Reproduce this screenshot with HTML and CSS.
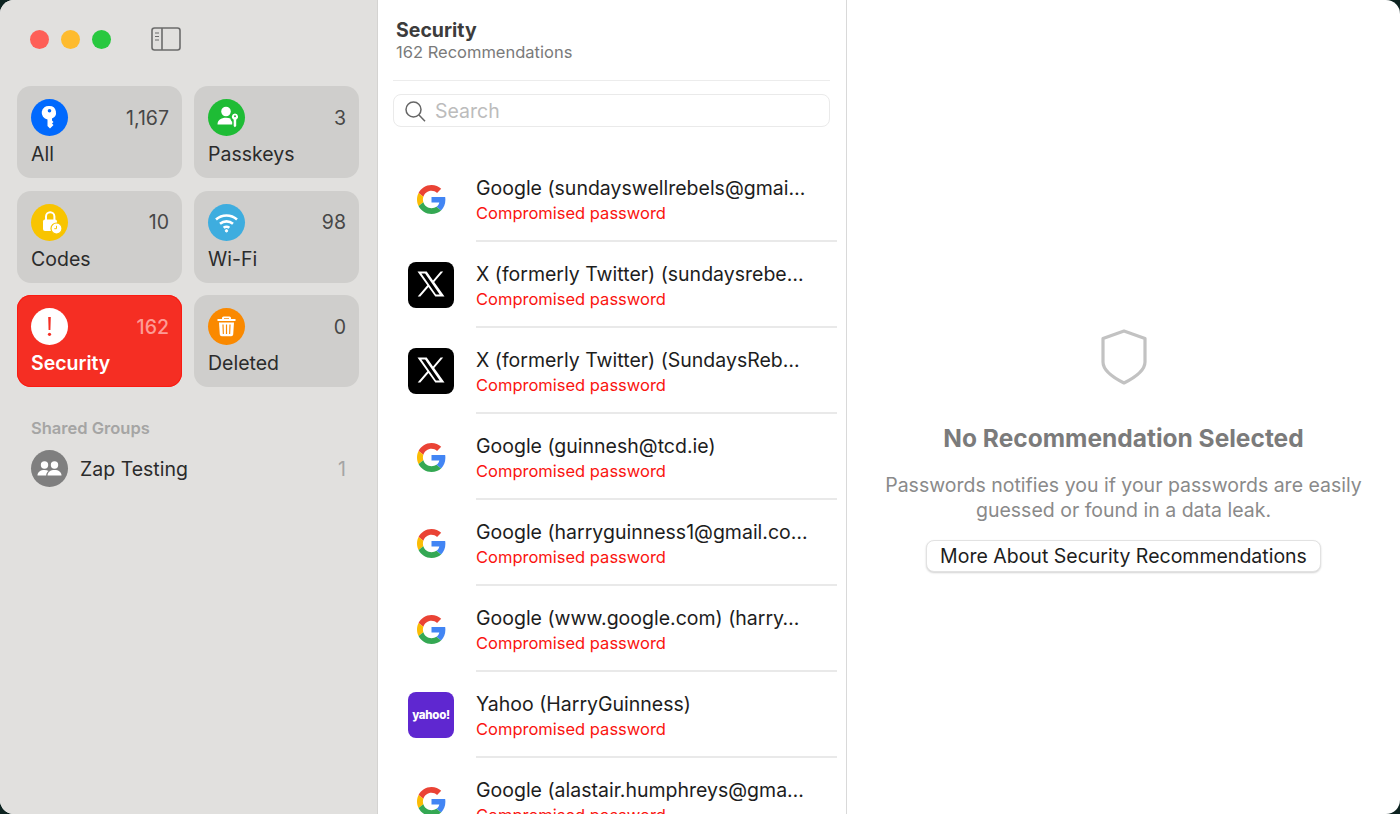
FILE: index.html
```html
<!DOCTYPE html>
<html lang="en">
<head>
<meta charset="utf-8">
<title>Passwords</title>
<link rel="stylesheet" href="styles.css">
</head>
<body>
<svg class="defs" width="0" height="0" aria-hidden="true">
  <symbol id="g" viewBox="0 0 48 48">
    <path fill="#EA4335" d="M24 9.5c3.54 0 6.71 1.22 9.21 3.6l6.85-6.85C35.9 2.38 30.47 0 24 0 14.62 0 6.51 5.38 2.56 13.22l7.98 6.19C12.43 13.72 17.74 9.5 24 9.5z"/>
    <path fill="#4285F4" d="M46.98 24.55c0-1.57-.15-3.09-.38-4.55H24v9.02h12.94c-.58 2.96-2.26 5.48-4.78 7.18l7.73 6c4.51-4.18 7.09-10.36 7.09-17.65z"/>
    <path fill="#FBBC05" d="M10.53 28.59c-.48-1.45-.76-2.99-.76-4.59s.27-3.14.76-4.59l-7.98-6.19C.92 16.46 0 20.12 0 24c0 3.88.92 7.54 2.56 10.78l7.97-6.19z"/>
    <path fill="#34A853" d="M24 48c6.48 0 11.93-2.13 15.89-5.81l-7.73-6c-2.15 1.45-4.92 2.3-8.16 2.3-6.26 0-11.57-4.22-13.47-9.91l-7.98 6.19C6.51 42.62 14.62 48 24 48z"/>
  </symbol>
  <symbol id="x" viewBox="0 0 46 46">
    <rect width="46" height="46" rx="8" fill="#000"/>
    <path fill="#fff" fill-rule="evenodd" d="M9.5 9.5h9.2l6.3 8.9 7.6-8.9h2.6l-9 10.5 10.300 14.500h-9.200l-6.800-9.600-8.200 9.600h-2.600l9.600-11.300zM13.400 11.500l14.600 21h3.700l-14.600-21z"/>
  </symbol>
</svg>
<div class="window">
  <aside class="sidebar">
    <div class="titlebar">
      <div class="lights">
        <span class="light red"></span>
        <span class="light yellow"></span>
        <span class="light green"></span>
      </div>
      <svg class="toggle" width="30" height="24" viewBox="0 0 30 24" fill="none" stroke="#6b6b6b" stroke-width="1.600">
        <rect x="1" y="1" width="28" height="22" rx="2.500"/>
        <path d="M11 1v22"/>
        <path d="M4 6h4M4 9.500h4M4 13h4" stroke-width="1.200"/>
      </svg>
    </div>
    <div class="cards">
      <div class="card">
        <div class="card-top">
          <span class="badge blue">
            <svg width="37" height="37" viewBox="0 0 37 37" fill="#fff"><path fill-rule="evenodd" d="M18.500 7a6.500 6.500 0 0 1 2.500 12.500v2l1.500 1.500-1.500 1.500 1.500 1.500-3.500 3.500-2.500-2.500v-6.500A6.500 6.500 0 0 1 18.500 7zm0 3a1.800 1.800 0 1 0 0 3.600 1.800 1.800 0 0 0 0-3.600z"/></svg>
          </span>
          <span class="count">1,167</span>
        </div>
        <div class="card-label">All</div>
      </div>
      <div class="card">
        <div class="card-top">
          <span class="badge lime">
            <svg width="37" height="37" viewBox="0 0 37 37" fill="#fff"><circle cx="18" cy="12.500" r="4.800"/><path d="M9.500 25.500c0-4.500 3.500-6.800 8.500-6.800 1.700 0 3.200.3 4.400.8.300 1.800 1 2.700 1.800 3.300v2.700z"/><path fill-rule="evenodd" d="M27 14.500a3.300 3.300 0 0 1 1.200 6.300v6.200l-1.300 1.300-1.200-1.300v-6.200A3.300 3.300 0 0 1 27 14.500zm0 1.800a1 1 0 1 0 0 2 1 1 0 0 0 0-2z"/></svg>
          </span>
          <span class="count">3</span>
        </div>
        <div class="card-label">Passkeys</div>
      </div>
      <div class="card">
        <div class="card-top">
          <span class="badge amber">
            <svg width="37" height="37" viewBox="0 0 37 37"><path fill="none" stroke="#fff" stroke-width="2" d="M15 16v-3.500a4.200 4.200 0 0 1 8.400 0V16"/><rect x="12" y="15.500" width="14" height="11.500" rx="2" fill="#fff"/><circle cx="25.500" cy="24.500" r="5.500" fill="#fff" stroke="#f8c400" stroke-width="1.200"/><path d="M25.500 21.800v2.900h-2.200" fill="none" stroke="#f8c400" stroke-width="1"/></svg>
          </span>
          <span class="count">10</span>
        </div>
        <div class="card-label">Codes</div>
      </div>
      <div class="card">
        <div class="card-top">
          <span class="badge sky">
            <svg width="37" height="37" viewBox="0 0 37 37" fill="none" stroke="#fff" stroke-width="2.600"><path d="M8 15.500c6-5.300 15-5.300 21 0"/><path d="M12 19.800c3.800-3.200 9.200-3.200 13 0"/><path d="M15.600 23.800c1.800-1.300 4-1.300 5.800 0"/><circle cx="18.500" cy="26.800" r="1.200" fill="#fff" stroke-width="1"/></svg>
          </span>
          <span class="count">98</span>
        </div>
        <div class="card-label">Wi-Fi</div>
      </div>
      <div class="card selected">
        <div class="card-top">
          <span class="badge white">
            <svg width="37" height="37" viewBox="0 0 37 37" fill="#f52e23"><path d="M17.200 9h2.600l-.4 13h-1.800z"/><circle cx="18.500" cy="26.300" r="1.600"/></svg>
          </span>
          <span class="count">162</span>
        </div>
        <div class="card-label">Security</div>
      </div>
      <div class="card">
        <div class="card-top">
          <span class="badge orange">
            <svg width="37" height="37" viewBox="0 0 37 37" fill="#fff"><path fill-rule="evenodd" d="M15.500 8.500h6a1.500 1.500 0 0 1 1.500 1.500v1h4.500v2h-18v-2H14v-1a1.500 1.500 0 0 1 1.500-1.500zM16 10.300v.7h5v-.7z"/><path fill-rule="evenodd" d="M11 14.500h15l-.8 12a2 2 0 0 1-2 1.800h-9.400a2 2 0 0 1-2-1.800zm3.400 2 .4 9.500h1.100l-.3-9.500zm3.500 0v9.500h1.200v-9.500zm3.500 0-.3 9.500h1.100l.4-9.500z"/></svg>
          </span>
          <span class="count">0</span>
        </div>
        <div class="card-label">Deleted</div>
      </div>
    </div>
    <div class="group-heading">Shared Groups</div>
    <div class="group-row">
      <span class="badge grey">
        <svg width="37" height="37" viewBox="0 0 37 37" fill="#fff"><circle cx="13.500" cy="15" r="3.700"/><circle cx="23.500" cy="15" r="3.700"/><path d="M6.500 25.500c0-3.500 3-5.500 7-5.500 1.600 0 3 .3 4.100 1-1.500 1-2.400 2.500-2.400 4.500z"/><path d="M16.500 25.500c0-3.500 3-5.500 7-5.500s7 2 7 5.500z"/></svg>
      </span>
      <span class="group-name">Zap Testing</span>
      <span class="group-count">1</span>
    </div>
  </aside>
  <main class="list">
    <header class="list-head">
      <h1 class="list-title">Security</h1>
      <p class="list-sub">162 Recommendations</p>
    </header>
    <div class="search">
      <svg width="22" height="22" viewBox="0 0 22 22" fill="none" stroke="#666" stroke-width="1.500"><circle cx="9.500" cy="9.500" r="7.500"/><path d="M15 15l6 6.300"/></svg>
      <span class="search-text">Search</span>
    </div>
    <div class="rows">
      <div class="row">
        <div class="logo"><svg class="g-icon"><use href="#g"/></svg></div>
        <div class="row-body"><div class="row-title">Google (sundayswellrebels@gmai…</div><div class="row-sub">Compromised password</div></div>
      </div>
      <div class="row">
        <div class="logo"><svg class="tile"><use href="#x"/></svg></div>
        <div class="row-body"><div class="row-title">X (formerly Twitter) (sundaysrebe…</div><div class="row-sub">Compromised password</div></div>
      </div>
      <div class="row">
        <div class="logo"><svg class="tile"><use href="#x"/></svg></div>
        <div class="row-body"><div class="row-title">X (formerly Twitter) (SundaysReb…</div><div class="row-sub">Compromised password</div></div>
      </div>
      <div class="row">
        <div class="logo"><svg class="g-icon"><use href="#g"/></svg></div>
        <div class="row-body"><div class="row-title">Google (guinnesh@tcd.ie)</div><div class="row-sub">Compromised password</div></div>
      </div>
      <div class="row">
        <div class="logo"><svg class="g-icon"><use href="#g"/></svg></div>
        <div class="row-body"><div class="row-title">Google (harryguinness1@gmail.co…</div><div class="row-sub">Compromised password</div></div>
      </div>
      <div class="row">
        <div class="logo"><svg class="g-icon"><use href="#g"/></svg></div>
        <div class="row-body"><div class="row-title">Google (www.google.com) (harry…</div><div class="row-sub">Compromised password</div></div>
      </div>
      <div class="row">
        <div class="logo"><span class="yahoo">yahoo!</span></div>
        <div class="row-body"><div class="row-title">Yahoo (HarryGuinness)</div><div class="row-sub">Compromised password</div></div>
      </div>
      <div class="row">
        <div class="logo"><svg class="g-icon"><use href="#g"/></svg></div>
        <div class="row-body"><div class="row-title">Google (alastair.humphreys@gma…</div><div class="row-sub">Compromised password</div></div>
      </div>
    </div>
  </main>
  <section class="detail">
    <svg class="shield" width="46" height="56" viewBox="0 0 46 56" fill="none" stroke="#c2c2c2" stroke-width="3.200" stroke-linejoin="round"><path d="M23 2 44 9.500V33c0 8-9 15-21 21C11 48 2 41 2 33V9.500z"/></svg>
    <h2 class="detail-title">No Recommendation Selected</h2>
    <p class="detail-text">Passwords notifies you if your passwords are easily guessed or found in a data leak.</p>
    <button class="more" type="button">More About Security Recommendations</button>
  </section>
</div>
</body>
</html>
```

FILE: styles.css
```css
* { box-sizing: border-box; }
html, body { margin: 0; height: 100%; }
body {
  background: #0d2320;
  font-family: Inter, "Noto Sans", "Liberation Sans", sans-serif;
  overflow: hidden;
}
.defs { position: absolute; }
.window {
  display: flex;
  width: 1400px;
  height: 814px;
  border-radius: 14px;
  overflow: hidden;
  background: #fff;
}
.sidebar {
  flex: 0 0 378px;
  background: #e1e0de;
  border-right: 1px solid #d4d3d1;
  padding: 26px 18px 0 17px;
}
.titlebar { display: flex; align-items: center; height: 26px; padding-left: 13px; }
.lights { display: flex; gap: 12px; }
.light { width: 19px; height: 19px; border-radius: 50%; }
.red { background: #fe5f57; }
.yellow { background: #febb2e; }
.green { background: #28c83f; }
.toggle { margin-left: 40px; }
.cards {
  display: grid;
  grid-template-columns: 165px 165px;
  grid-auto-rows: 92px;
  column-gap: 12px;
  row-gap: 12.500px;
  margin-top: 34px;
}
.card {
  background: #cfcecc;
  border-radius: 14px;
  padding: 13px 13px 0 14px;
  color: #2b2b2b;
}
.card-top { display: flex; justify-content: space-between; align-items: center; }
.badge { width: 37px; height: 37px; border-radius: 50%; flex: none; display: block; }
.badge svg { display: block; }
.blue { background: #0069fe; }
.lime { background: #1ebc35; }
.amber { background: #f8c400; }
.sky { background: #3eaddf; }
.orange { background: #fa8900; }
.grey { background: #7f7f7f; }
.white { background: #fff; }
.count { font-size: 19.500px; color: #474747; }
.card-label { font-size: 19.500px; line-height: 24px; margin-top: 6px; }
.selected { background: #f52e23; box-shadow: inset 0 0 0 1px #fb1b12; color: #fff; }
.selected .card-label { font-weight: 600; }
.selected .count { color: #fd9b95; font-weight: 500; }
.group-heading {
  margin: 31px 0 0 14px;
  font-size: 16.500px;
  font-weight: 600;
  line-height: 20px;
  color: #a5a5a4;
}
.group-row { display: flex; align-items: center; margin: 12px 13px 0 14px; }
.group-name { margin-left: 12px; font-size: 19.500px; color: #2b2b2b; }
.group-count { margin-left: auto; font-size: 19.500px; color: #a5a5a4; }
.list {
  flex: 0 0 469px;
  border-right: 1px solid #d9d9d9;
  padding: 0 16px 0 15px;
  overflow: hidden;
}
.list-head { padding: 19px 0 0 3px; height: 81px; border-bottom: 1px solid #ececec; }
.list-title { margin: 0; font-size: 19.500px; line-height: 22px; font-weight: 700; color: #3c3c3c; }
.list-sub { margin: 0; font-size: 16.500px; line-height: 23px; color: #7a7a7a; }
.search {
  display: flex;
  align-items: center;
  height: 33px;
  margin-top: 13px;
  padding-left: 10px;
  border: 1px solid #eaeaea;
  border-radius: 8px;
}
.search-text { margin-left: 9px; font-size: 19.500px; color: #bcbcbc; }
.rows { margin: 29px -7px 0 0; }
.row { display: flex; height: 86px; }
.logo { flex: 0 0 83px; display: flex; align-items: center; padding-left: 15px; height: 86px; }
.tile { width: 46px; height: 46px; display: block; }
.g-icon { width: 29px; height: 29px; display: block; margin-left: 8.500px; }
.yahoo {
  width: 46px;
  height: 46px;
  border-radius: 8px;
  background: #5f27d0;
  color: #fff;
  font-size: 11.500px;
  font-weight: 800;
  letter-spacing: -0.300px;
  line-height: 46px;
  text-align: center;
}
.row-body { flex: 1; height: 86px; padding-top: 19px; border-bottom: 2px solid #e9e9e9; min-width: 0; }
.row-title { font-size: 19.500px; line-height: 27px; color: #1d1d1d; white-space: nowrap; }
.row-sub { font-size: 16.500px; line-height: 22px; color: #fa1410; white-space: nowrap; }
.detail {
  flex: 1;
  display: flex;
  flex-direction: column;
  align-items: center;
  padding-top: 329px;
  min-width: 0;
}
.shield { display: block; }
.detail-title { margin: 38px 0 0; font-size: 24.500px; line-height: 30px; font-weight: 700; color: #7b7b7b; }
.detail-text {
  margin: 20px 0 0;
  width: 490px;
  text-align: center;
  font-size: 19.500px;
  line-height: 25px;
  color: #8a8a8a;
}
.more {
  margin-top: 17px;
  width: 395px;
  height: 32px;
  padding: 0;
  background: #fff;
  border: 1px solid #e2e2e2;
  border-radius: 8px;
  box-shadow: 0 1px 2px rgba(0,0,0,.18);
  font-family: inherit;
  font-size: 19.500px;
  color: #1d1d1d;
}
```
